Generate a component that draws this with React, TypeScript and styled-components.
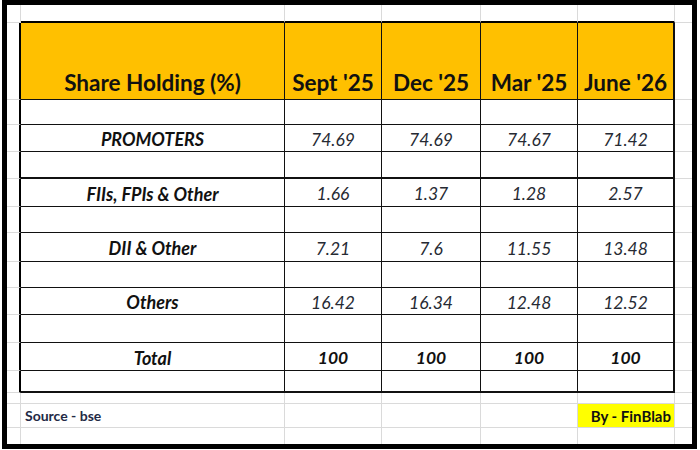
import React from "react";
import styled, { createGlobalStyle } from "styled-components";

const GlobalStyle = createGlobalStyle`
  html, body {
    margin: 0;
    padding: 0;
    background: #ffffff;
  }
  body {
    font-family: Lato, "Liberation Sans", sans-serif;
    color: #1c1c1c;
  }
`;

const Page = styled.div`
  width: 700px;
  height: 450px;
  padding: 0 3px 1px 2px;
  box-sizing: border-box;
  background: #ffffff;
`;

const Frame = styled.div`
  width: 695px;
  height: 449px;
  border: 5px solid #000;
  box-sizing: border-box;
  overflow: hidden;
`;

const Sheet = styled.div`
  display: grid;
  grid-template-columns: 14px 264px 97px 99px 97px 97px 17px;
  grid-template-rows: 18px 77px 25px 27px 27px 28px 26px 29px 26px 27px 28px 28px 22px 11px 24px 16px;
`;

const Cell = styled.div<{ $noBottom?: boolean }>`
  box-sizing: border-box;
  border-right: 1px solid #dadada;
  border-bottom: ${(p) => (p.$noBottom ? "none" : "1px solid #dadada")};
  display: flex;
  align-items: center;
  justify-content: center;
  min-width: 0;
`;

const GutterCell = styled(Cell)<{ $edge?: boolean }>`
  border-right: ${(p) => (p.$edge ? "2px solid #000" : "1px solid #dadada")};
`;

const TopCell = styled(Cell)`
  border-bottom: 2px solid #000;
`;

const RightCell = styled(Cell)`
  border-right: none;
`;

const TableCell = styled(Cell)<{ $lastCol?: boolean; $lastRow?: boolean; $thick?: boolean }>`
  border-right: ${(p) => (p.$lastCol ? "2px" : "1px")} solid #111;
  border-bottom: ${(p) => (p.$lastRow || p.$thick ? "2px" : "1px")} solid #111;
`;

const HeadCell = styled(TableCell)`
  background: #ffc000;
  align-items: flex-end;
  padding-bottom: 3px;
  font-size: 22.5px;
  font-weight: 700;
  color: #111;
  white-space: nowrap;
`;

const LabelCell = styled(TableCell)`
  padding-top: 2px;
  font-size: 18px;
  font-weight: 700;
  font-style: italic;
  color: #111;
`;

const ValueCell = styled(TableCell)<{ $bold?: boolean }>`
  padding-top: 2px;
  font-size: 17.5px;
  font-style: italic;
  font-weight: ${(p) => (p.$bold ? 700 : 400)};
  color: ${(p) => (p.$bold ? "#111" : "#262a33")};
`;

const SourceCell = styled(Cell)`
  justify-content: flex-start;
  padding-left: 4px;
  font-size: 14px;
  font-weight: 700;
  color: #232a45;
`;

const Badge = styled(Cell)`
  background: #ffff00;
  justify-content: flex-end;
  padding-right: 3px;
  font-size: 15px;
  font-weight: 700;
  color: #111;
`;

const quarters = ["Sept '25", "Dec '25", "Mar '25", "June '26"];

const holdings = [
  { label: "PROMOTERS", values: ["74.69", "74.69", "74.67", "71.42"] },
  { label: "FIIs, FPIs & Other", values: ["1.66", "1.37", "1.28", "2.57"] },
  { label: "DII & Other", values: ["7.21", "7.6", "11.55", "13.48"] },
  { label: "Others", values: ["16.42", "16.34", "12.48", "12.52"] },
  { label: "Total", values: ["100", "100", "100", "100"], total: true },
];

type BodyRow = { label?: string; values?: string[]; total?: boolean };

const bodyRows: BodyRow[] = [];
holdings.forEach((h) => {
  bodyRows.push({});
  bodyRows.push(h);
});
bodyRows.push({});

export default function App() {
  return (
    <Page>
      <GlobalStyle />
      <Frame>
        <Sheet>
          <GutterCell />
          {quarters.concat("").map((_, i) => (
            <TopCell key={`top-${i}`} />
          ))}
          <RightCell />

          <GutterCell $edge />
          <HeadCell>Share Holding (%)</HeadCell>
          {quarters.map((q, i) => (
            <HeadCell key={q} $lastCol={i === quarters.length - 1}>
              {q}
            </HeadCell>
          ))}
          <RightCell />

          {bodyRows.map((row, r) => {
            const lastRow = r === bodyRows.length - 1;
            const thick = r === 2;
            return (
              <React.Fragment key={`row-${r}`}>
                <GutterCell $edge />
                <LabelCell $lastRow={lastRow} $thick={thick}>
                  {row.label}
                </LabelCell>
                {quarters.map((_, c) => (
                  <ValueCell
                    key={c}
                    $bold={row.total}
                    $lastCol={c === quarters.length - 1}
                    $lastRow={lastRow}
                    $thick={thick}
                  >
                    {row.values ? row.values[c] : null}
                  </ValueCell>
                ))}
                <RightCell />
              </React.Fragment>
            );
          })}

          <GutterCell />
          {quarters.concat("").map((_, i) => (
            <Cell key={`gap-${i}`} />
          ))}
          <RightCell />

          <GutterCell />
          <SourceCell>Source - bse</SourceCell>
          <Cell />
          <Cell />
          <Cell />
          <Badge>By - FinBlab</Badge>
          <RightCell />

          <GutterCell $noBottom />
          {quarters.concat("").map((_, i) => (
            <Cell key={`end-${i}`} $noBottom />
          ))}
          <RightCell $noBottom />
        </Sheet>
      </Frame>
    </Page>
  );
}
